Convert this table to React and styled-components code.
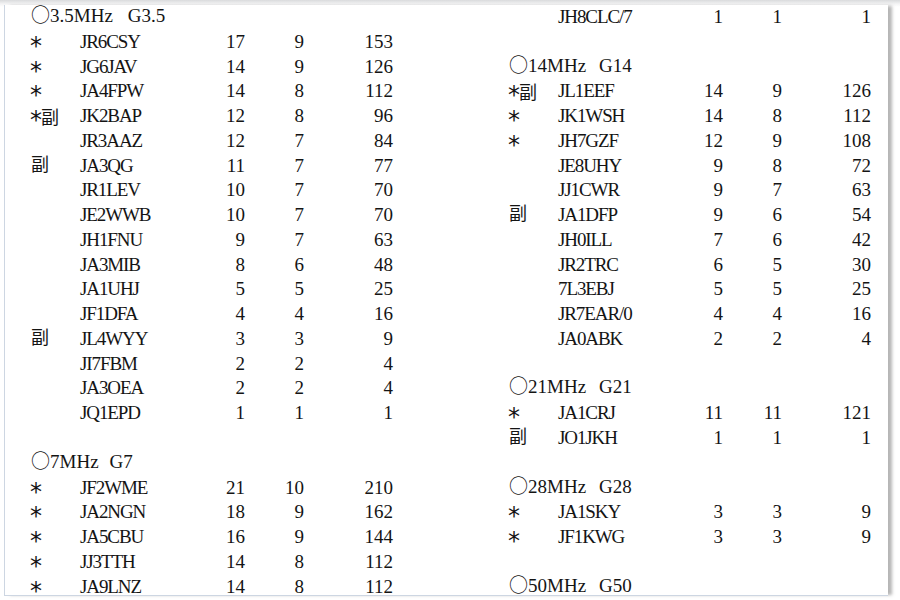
import React from "react";
import styled, { createGlobalStyle } from "styled-components";

const Global = createGlobalStyle`
  html, body { margin: 0; padding: 0; background: #fff; }
  #root { width: 900px; height: 600px; }
`;

const Viewer = styled.div`
  width: 900px;
  height: 600px;
  overflow: hidden;
  background: linear-gradient(#d9dadc 0px, #f4f4f5 4px, #ffffff 7px);
  padding: 5px 0 0 4px;
  box-sizing: border-box;
`;

const Paper = styled.div`
  width: 884px;
  height: 591px;
  box-sizing: border-box;
  background: #fff;
  border-left: 1px solid #cdd6e2;
  border-bottom: 1px solid #cdd6e2;
  box-shadow: 5px 0 3px -1px rgba(110, 110, 110, 0.5);
  overflow: hidden;
  padding-left: 26px;
  display: grid;
  grid-template-columns: 478px 1fr;
  font-family: "Liberation Serif", "Noto Sans CJK JP", serif;
  font-size: 19px;
  line-height: 24.78px;
  color: #141414;
`;

const Column = styled.div`
  display: flex;
  flex-direction: column;
`;

const Line = styled.div`
  height: 24.78px;
  white-space: nowrap;
`;

const Header = styled(Line)`
  display: flex;
  gap: ${(p) => p.$gap}px;
  margin-top: -1px;
  margin-bottom: 1px;
`;

const Circle = styled.span`
  font-family: "Noto Sans CJK JP", sans-serif;
  font-size: 19px;
  line-height: 1;
`;

const Row = styled(Line)`
  display: grid;
  grid-template-columns: 49px 115px 50px 59px 89px;
`;

const Mark = styled.span`
  display: flex;
  align-items: baseline;
`;

const Star = styled.span`
  display: inline-block;
  width: 10px;
  font-family: "DejaVu Sans", sans-serif;
  font-size: 24px;
  line-height: 1;
  transform: translate(-1px, 4px);
`;

const Fuku = styled.span`
  font-family: "Noto Sans CJK JP", sans-serif;
  font-size: 18px;
  line-height: 1;
`;

const Call = styled.span`
  letter-spacing: -1.1px;
`;

const Num = styled.span`
  text-align: right;
`;

const left = [
  { h: ["3.5MHz", "G3.5"], gap: 15 },
  ["*", "JR6CSY", 17, 9, 153],
  ["*", "JG6JAV", 14, 9, 126],
  ["*", "JA4FPW", 14, 8, 112],
  ["*副", "JK2BAP", 12, 8, 96],
  ["", "JR3AAZ", 12, 7, 84],
  ["副", "JA3QG", 11, 7, 77],
  ["", "JR1LEV", 10, 7, 70],
  ["", "JE2WWB", 10, 7, 70],
  ["", "JH1FNU", 9, 7, 63],
  ["", "JA3MIB", 8, 6, 48],
  ["", "JA1UHJ", 5, 5, 25],
  ["", "JF1DFA", 4, 4, 16],
  ["副", "JL4WYY", 3, 3, 9],
  ["", "JI7FBM", 2, 2, 4],
  ["", "JA3OEA", 2, 2, 4],
  ["", "JQ1EPD", 1, 1, 1],
  null,
  { h: ["7MHz", "G7"], gap: 11 },
  ["*", "JF2WME", 21, 10, 210],
  ["*", "JA2NGN", 18, 9, 162],
  ["*", "JA5CBU", 16, 9, 144],
  ["*", "JJ3TTH", 14, 8, 112],
  ["*", "JA9LNZ", 14, 8, 112],
];

const right = [
  ["", "JH8CLC/7", 1, 1, 1],
  null,
  { h: ["14MHz", "G14"], gap: 13 },
  ["*副", "JL1EEF", 14, 9, 126],
  ["*", "JK1WSH", 14, 8, 112],
  ["*", "JH7GZF", 12, 9, 108],
  ["", "JE8UHY", 9, 8, 72],
  ["", "JJ1CWR", 9, 7, 63],
  ["副", "JA1DFP", 9, 6, 54],
  ["", "JH0ILL", 7, 6, 42],
  ["", "JR2TRC", 6, 5, 30],
  ["", "7L3EBJ", 5, 5, 25],
  ["", "JR7EAR/0", 4, 4, 16],
  ["", "JA0ABK", 2, 2, 4],
  null,
  { h: ["21MHz", "G21"], gap: 13 },
  ["*", "JA1CRJ", 11, 11, 121],
  ["副", "JO1JKH", 1, 1, 1],
  null,
  { h: ["28MHz", "G28"], gap: 13 },
  ["*", "JA1SKY", 3, 3, 9],
  ["*", "JF1KWG", 3, 3, 9],
  null,
  { h: ["50MHz", "G50"], gap: 13 },
];

function MarkCell({ m }) {
  return (
    <Mark>
      {m.includes("*") && <Star>*</Star>}
      {m.includes("副") && <Fuku>副</Fuku>}
    </Mark>
  );
}

function Lines({ items }) {
  return items.map((it, i) => {
    if (it === null) return <Line key={i} />;
    if (it.h)
      return (
        <Header key={i} $gap={it.gap}>
          <span>
            <Circle>○</Circle>
            {it.h[0]}
          </span>
          <span>{it.h[1]}</span>
        </Header>
      );
    const [m, call, a, b, c] = it;
    return (
      <Row key={i}>
        <MarkCell m={m} />
        <Call>{call}</Call>
        <Num>{a}</Num>
        <Num>{b}</Num>
        <Num>{c}</Num>
      </Row>
    );
  });
}

export default function App() {
  return (
    <>
      <Global />
      <Viewer>
        <Paper>
          <Column>
            <Lines items={left} />
          </Column>
          <Column>
            <Lines items={right} />
          </Column>
        </Paper>
      </Viewer>
    </>
  );
}
